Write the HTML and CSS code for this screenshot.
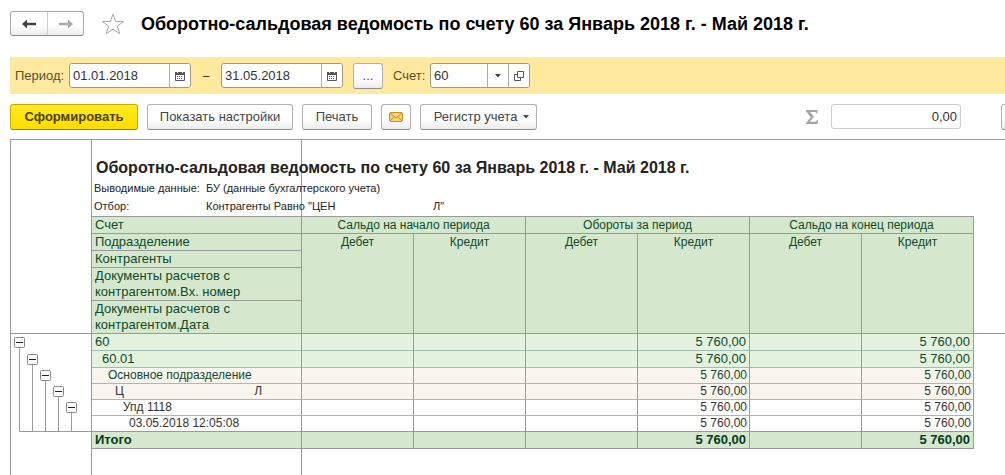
FILE: index.html
```
<!DOCTYPE html>
<html lang="ru">
<head>
<meta charset="utf-8">
<title>Оборотно-сальдовая ведомость по счету 60</title>
<link rel="stylesheet" href="styles.css">
</head>
<body>
<header class="titlebar">
  <div class="nav">
    <button class="nav-btn" type="button" aria-label="Назад"><svg width="14" height="10" viewBox="0 0 14 10"><path d="M0 5 5 0.5V3.8H14V6.2H5V9.5Z" fill="#444"/></svg></button>
    <button class="nav-btn" type="button" aria-label="Вперед"><svg width="14" height="10" viewBox="0 0 14 10"><path d="M14 5 9 0.5V3.8H0V6.2H9V9.5Z" fill="#aaa"/></svg></button>
  </div>
  <button class="star" type="button" aria-label="В избранное"><svg width="24" height="22" viewBox="0 0 24 22"><path d="M12 1.2 14.6 8.5H22.6L16.3 13.2 18.8 20.8 12 16.2 5.2 20.8 7.7 13.2 1.4 8.5H9.4Z" fill="#fff" stroke="#aaa"/></svg></button>
  <h1 class="page-title">Оборотно-сальдовая ведомость по счету 60 за Январь 2018 г. - Май 2018 г.</h1>
</header>

<section class="filters">
  <label class="filter-label" for="from">Период:</label>
  <div class="field date">
    <input id="from" type="text" value="01.01.2018">
    <button type="button" aria-label="Выбрать дату начала"><svg width="10" height="10" viewBox="0 0 10 10"><path d="M0.5 1.5h9v8h-9z" fill="#fff" stroke="#555"/><path d="M0 1h10v3H0z" fill="#555"/><path d="M2.5 0v2M7.5 0v2" stroke="#fff"/><path d="M2 5.5h6M2 7.5h6" stroke="#555" stroke-dasharray="1 1"/></svg></button>
  </div>
  <span class="dash">–</span>
  <div class="field date">
    <input id="to" type="text" value="31.05.2018" aria-label="Конец периода">
    <button type="button" aria-label="Выбрать дату конца"><svg width="10" height="10" viewBox="0 0 10 10"><path d="M0.5 1.5h9v8h-9z" fill="#fff" stroke="#555"/><path d="M0 1h10v3H0z" fill="#555"/><path d="M2.5 0v2M7.5 0v2" stroke="#fff"/><path d="M2 5.5h6M2 7.5h6" stroke="#555" stroke-dasharray="1 1"/></svg></button>
  </div>
  <button class="btn more" type="button">...</button>
  <label class="filter-label" for="account">Счет:</label>
  <div class="field account">
    <input id="account" type="text" value="60">
    <button type="button" aria-label="Выбрать счет"><svg width="6" height="4" viewBox="0 0 6 4"><path d="M0 0h6L3 3.6z" fill="#444"/></svg></button>
    <button type="button" aria-label="Открыть счет"><svg width="10" height="10" viewBox="0 0 10 10"><path d="M3.5 0.5h6v6h-6zM3.5 3.5h-3v6h6v-3" fill="none" stroke="#555"/></svg></button>
  </div>
</section>

<section class="toolbar">
  <button class="btn primary" type="button">Сформировать</button>
  <button class="btn settings" type="button">Показать настройки</button>
  <button class="btn print" type="button">Печать</button>
  <button class="btn mail" type="button" aria-label="Отправить по почте"><svg width="14" height="10" viewBox="0 0 14 10"><rect x="0.5" y="0.5" width="13" height="9" rx="1" fill="#fbd173" stroke="#c68f2c"/><path d="M1 1 7 6 13 1M1 9 5 4.6M13 9 9 4.6" fill="none" stroke="#c68f2c"/></svg></button>
  <button class="btn register" type="button">Регистр учета<svg width="6" height="4" viewBox="0 0 6 4"><path d="M0 0h6L3 3.6z" fill="#444"/></svg></button>
  <label class="sigma" for="sum"><svg width="12" height="14" viewBox="0 0 12 14" role="img" aria-label="Сумма"><path d="M0 0H11.5V3.5H10.4C10.2 2.3 9.7 2 8.5 2H4L8 6.8 3.7 11.8H9C10.2 11.8 10.6 11.2 10.9 10H12L11.5 14H0V12.9L4.8 7.2 0 1.2Z" fill="#a3a3a3"/></svg></label>
  <input class="sum" id="sum" type="text" value="0,00" readonly>
  <button class="btn edge" type="button" aria-label="Еще"></button>
</section>

<main>
<table class="sheet">
  <colgroup><col class="c-outline"><col class="c-name"><col class="c-num"><col class="c-num"><col class="c-num"><col class="c-num"><col class="c-num"><col class="c-num"><col></colgroup>
  <thead>
    <tr class="r-title"><td class="outline line" rowspan="8"></td><td class="name"><h2 class="report-title">Оборотно-сальдовая ведомость по счету 60 за Январь 2018 г. - Май 2018 г.</h2></td><td colspan="6"></td><td class="line" rowspan="8"></td></tr>
    <tr class="r-meta"><td class="name"><div class="meta"><span class="meta-key">Выводимые данные:</span><span>БУ (данные бухгалтерского учета)</span></div></td><td colspan="6"></td></tr>
    <tr class="r-meta"><td class="name line"><div class="meta"><span class="meta-key">Отбор:</span><span class="masked">Контрагенты Равно "ЦЕН</span><span>Л"</span></div></td><td class="line" colspan="6"></td></tr>
    <tr class="head"><th class="label">Счет</th><th colspan="2">Сальдо на начало периода</th><th colspan="2">Обороты за период</th><th colspan="2">Сальдо на конец периода</th></tr>
    <tr class="head"><th class="label">Подразделение</th><th class="sub" rowspan="4">Дебет</th><th class="sub" rowspan="4">Кредит</th><th class="sub" rowspan="4">Дебет</th><th class="sub" rowspan="4">Кредит</th><th class="sub" rowspan="4">Дебет</th><th class="sub" rowspan="4">Кредит</th></tr>
    <tr class="head"><th class="label">Контрагенты</th></tr>
    <tr class="head tall"><th class="label">Документы расчетов с контрагентом.Вх. номер</th></tr>
    <tr class="head tall"><th class="label">Документы расчетов с контрагентом.Дата</th></tr>
  </thead>
  <tbody>
    <tr class="row acc"><td class="outline tree" rowspan="6"><svg width="80" height="98" viewBox="0 0 80 98"><path d="M8.500 14V97.500H80M21.500 31V97M34.500 47V97M47.500 63V97M60.500 79V97" fill="none" stroke="#999"/><g fill="#fff" stroke="#888"><rect x="3.500" y="3.500" width="10" height="10" rx="1"/><rect x="16.500" y="20.500" width="10" height="10" rx="1"/><rect x="29.500" y="36.500" width="10" height="10" rx="1"/><rect x="42.500" y="52.500" width="10" height="10" rx="1"/><rect x="55.500" y="68.500" width="10" height="10" rx="1"/></g><path d="M5 8.500h7M18 25.500h7M31 41.500h7M44 57.500h7M57 73.500h7" stroke="#222"/></svg></td><td class="lvl0">60</td><td></td><td></td><td></td><td>5 760,00</td><td></td><td>5 760,00</td><td class="rest" rowspan="8"></td></tr>
    <tr class="row acc"><td class="lvl1">60.01</td><td></td><td></td><td></td><td>5 760,00</td><td></td><td>5 760,00</td></tr>
    <tr class="row part green"><td class="lvl2">Основное подразделение</td><td></td><td></td><td></td><td>5 760,00</td><td></td><td>5 760,00</td></tr>
    <tr class="row part"><td class="lvl3"><div class="partner"><span>Ц</span><span>Л</span></div></td><td></td><td></td><td></td><td>5 760,00</td><td></td><td>5 760,00</td></tr>
    <tr class="row doc"><td class="lvl4">Упд 1118</td><td></td><td></td><td></td><td>5 760,00</td><td></td><td>5 760,00</td></tr>
    <tr class="row doc last"><td class="lvl5">03.05.2018 12:05:08</td><td></td><td></td><td></td><td>5 760,00</td><td></td><td>5 760,00</td></tr>
    <tr class="row total"><td class="outline"></td><td class="lvl0">Итого</td><td></td><td></td><td></td><td>5 760,00</td><td></td><td>5 760,00</td></tr>
    <tr class="r-blank"><td class="outline"></td><td class="name"></td><td colspan="6"></td></tr>
  </tbody>
</table>
</main>
</body>
</html>
```
FILE: styles.css
```
* { box-sizing: border-box; }
body { margin: 0; background: #fff; color: #333; font: 12px/16px "Liberation Sans", Arial, sans-serif; overflow-x: hidden; }
button, input { font: inherit; color: inherit; margin: 0; }
button { display: flex; align-items: center; justify-content: center; padding: 0; }
svg { display: block; flex: none; }

.titlebar { display: flex; align-items: center; height: 57px; padding: 0 10px 10px; }
.nav { display: flex; height: 25px; border: 1px solid #aaa; border-bottom-color: #888; border-radius: 3px; background: linear-gradient(#fff 60%, #ececec); }
.nav-btn { width: 36px; border: 0; background: none; }
.nav-btn + .nav-btn { border-left: 1px solid #ccc; }
.star { margin-left: 17px; border: 0; background: none; }
.page-title { margin: 0 0 0 16px; font-size: 18px; line-height: 24px; color: #000; white-space: nowrap; }

.filters { display: flex; align-items: center; height: 37px; margin-left: 10px; padding-left: 5px; background: #fee99e; }
.filter-label { width: 48px; color: #5c4f2c; font-size: 13px; white-space: nowrap; }
.field { display: flex; height: 25px; border: 1px solid #a09a80; border-radius: 3px; background: #fff; overflow: hidden; }
.field input { flex: 1; min-width: 0; padding: 0 3px; border: 0; background: none; font-size: 13px; outline: 0; }
.field button { width: 21px; border: 0; border-left: 1px solid #aaa; background: #fff; }
.date { width: 122px; margin-left: 6px; }
.dash { width: 30px; text-align: center; }
.dash + .date { margin-left: 0; }
.more + .filter-label { width: 37px; }
.account { width: 100px; }

.btn { height: 26px; border: 1px solid #b0b0b0; border-bottom-color: #8c8c8c; border-radius: 3px; background: linear-gradient(#fff 60%, #ececec); color: #444; font-size: 13px; white-space: nowrap; }
.more { width: 30px; margin: 0 10px; }
.toolbar { display: flex; align-items: center; gap: 9px; height: 45px; padding: 0 0 0 10px; overflow: hidden; }
.primary { width: 128px; border-color: #c9a800; border-bottom-color: #9a8200; background: linear-gradient(#ffec1f, #ffdc00); color: #4a4000; font-weight: bold; }
.settings { width: 146px; }
.print { width: 70px; }
.mail { width: 30px; }
.register { width: 117px; gap: 6px; padding-left: 6px; }
.sigma { margin-left: auto; }
.sum { width: 130px; height: 25px; margin-left: 4px; padding: 0 3px; border: 1px solid #ccc; border-radius: 3px; background: #fff; font-size: 13px; text-align: right; }
.edge { width: 8px; margin: 0 -4px 0 31px; }

.sheet { width: calc(100% - 10px); margin-left: 10px; border-top: 1px solid #999; border-spacing: 0; table-layout: fixed; }
.c-outline { width: 82px; }
.c-name { width: 210px; }
.c-num { width: 112px; }
.sheet td, .sheet th { padding: 0; font-weight: normal; white-space: nowrap; }
.sheet .outline { border-left: 1px solid #999; border-right: 1px solid #999; vertical-align: top; }
.sheet .name { border-right: 1px solid #999; }
.sheet .line { border-bottom: 1px solid #999; }
.r-title { height: 40px; }
.report-title { width: 200px; margin: 16px 0 0 4px; font-size: 16px; line-height: 20px; color: #222; }
.r-meta { height: 18px; font-size: 11px; line-height: 16px; color: #222; }
.r-meta td { vertical-align: top; }
.r-meta + .r-meta { height: 19px; }
.meta { display: flex; width: 200px; padding-left: 2px; }
.meta span { flex: none; }
.meta .meta-key { width: 112px; }
.meta .masked { width: 227px; }
.head { height: 17px; color: #0d4a2a; }
.head th { height: 17px; border-right: 1px solid #999; border-bottom: 1px solid #999; background: #d5e8ce; }
.head .label { padding-left: 3px; font-size: 13px; text-align: left; white-space: normal; }
.head .sub { vertical-align: top; }
.tall, .head.tall th { height: 33px; }
.row td { height: 16px; padding: 0 2px 0 0; border-right: 1px solid #999; border-bottom: 1px solid #9fbdb0; line-height: 15px; text-align: right; }
.row .outline { padding: 0; border-bottom: 0; }
.row .rest { border: 0; }
.row .lvl0, .row .lvl1, .row .lvl2, .row .lvl3, .row .lvl4, .row .lvl5 { text-align: left; }
.row .lvl0 { padding-left: 3px; }
.row .lvl1 { padding-left: 10px; }
.row .lvl2 { padding-left: 16px; }
.row .lvl3 { padding-left: 23px; }
.row .lvl4 { padding-left: 31px; }
.row .lvl5 { padding-left: 37px; }
.partner { display: flex; justify-content: space-between; width: 147px; }
.acc td:not(.outline) { height: 17px; padding-right: 3px; font-size: 13px; line-height: 16px; }
.acc { color: #0d4a2a; }
.acc td:not(.outline):not(.rest) { background: #e4f3de; }
.green { color: #0d4a2a; }
.part td { background: #f8f6ee; }
.last td { border-bottom-color: #999; }
.total { color: #003c1c; }
.total td { height: 17px; padding-right: 3px; border-bottom-color: #999; line-height: 16px; }
.sheet .total td { font-size: 13px; font-weight: bold; }
.total td:not(.outline) { background: #d5e8ce; }
.r-blank { height: 26px; }
```
